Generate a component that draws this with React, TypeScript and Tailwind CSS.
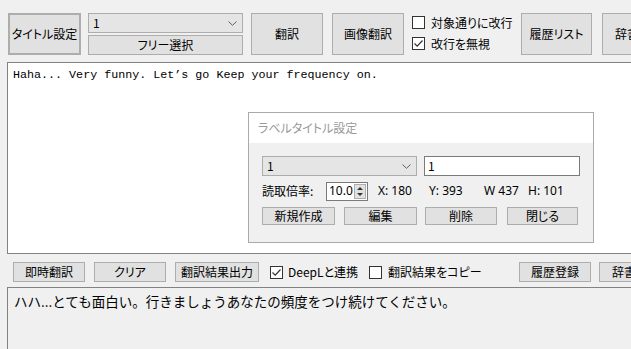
import React from "react";

const ui = "font-['Noto_Sans_CJK_JP','Noto_Sans',sans-serif] [font-feature-settings:'palt'] text-[12px] text-black";

function Btn({ children, className = "" }: { children: React.ReactNode; className?: string }) {
  return (
    <div
      className={`flex shrink-0 items-center justify-center border border-[#adadad] bg-[#e1e1e1] leading-none ${className}`}
    >
      {children}
    </div>
  );
}

function Check({ checked }: { checked?: boolean }) {
  return (
    <div className="flex h-[13px] w-[13px] shrink-0 items-center justify-center border border-[#333333] bg-white">
      {checked && (
        <svg width="11" height="11" viewBox="0 0 11 11">
          <polyline points="1.5,5.5 4.2,8.2 9.5,2.5" fill="none" stroke="#333" strokeWidth="1.2" />
        </svg>
      )}
    </div>
  );
}

function Chevron() {
  return (
    <svg width="9" height="5" viewBox="0 0 9 5">
      <polyline points="0.5,0.5 4.5,4.3 8.5,0.5" fill="none" stroke="#606060" strokeWidth="1" />
    </svg>
  );
}

export default function App() {
  return (
    <div className={`relative h-[349px] w-[631px] overflow-hidden bg-[#f0f0f0] ${ui}`}>
      {/* top toolbar */}
      <div className="flex h-[55px] items-start pl-[8px] pt-[13px]">
        <Btn className="h-[42px] w-[73px] border-2 border-[#0078d7]">タイトル設定</Btn>
        <div className="ml-[7px] flex w-[155px] shrink-0 flex-col gap-[2px]">
          <div className="flex h-[20px] items-center justify-between border border-[#adadad] bg-[#e5e5e5] pl-[4px] pr-[5px]">
            <span className="leading-none">1</span>
            <Chevron />
          </div>
          <Btn className="h-[20px]">フリー選択</Btn>
        </div>
        <Btn className="ml-[8px] h-[42px] w-[72px]">翻訳</Btn>
        <Btn className="ml-[9px] h-[42px] w-[72px]">画像翻訳</Btn>
        <div className="ml-[8px] flex w-[109px] shrink-0 flex-col gap-[8px] pt-[3px]">
          <div className="flex h-[13px] items-center gap-[6px]">
            <Check />
            <span className="leading-none">対象通りに改行</span>
          </div>
          <div className="flex h-[13px] items-center gap-[6px]">
            <Check checked />
            <span className="leading-none">改行を無視</span>
          </div>
        </div>
        <Btn className="h-[42px] w-[71px]">履歴リスト</Btn>
        <Btn className="ml-[10px] h-[42px] w-[72px] justify-start pl-[12px]">辞書登録</Btn>
      </div>

      {/* top text area */}
      <div className="ml-[7px] mt-[7px] h-[192px] w-[640px] border border-[#828282] bg-white px-[5px] pt-[5px] font-['Liberation_Mono',monospace] text-[11.7px] leading-[14px] [font-feature-settings:normal]">
        Haha... Very funny. Let’s go Keep your frequency on.
      </div>

      {/* bottom toolbar */}
      <div className="flex h-[20px] items-center pl-[13px] mt-[8px]">
        <Btn className="h-[20px] w-[72px]">即時翻訳</Btn>
        <Btn className="ml-[9px] h-[20px] w-[72px]">クリア</Btn>
        <Btn className="ml-[9px] h-[20px] w-[84px]">翻訳結果出力</Btn>
        <div className="ml-[11px] flex items-center gap-[5px]">
          <Check checked />
          <span className="leading-none">DeepLと連携</span>
        </div>
        <div className="ml-[11px] flex items-center gap-[6px]">
          <Check />
          <span className="leading-none">翻訳結果をコピー</span>
        </div>
        <div className="flex-1" />
        <Btn className="h-[20px] w-[72px]">履歴登録</Btn>
        <Btn className="ml-[8px] mr-[-40px] h-[20px] w-[72px] justify-start pl-[12px]">辞書</Btn>
      </div>

      {/* bottom text area */}
      <div className="ml-[7px] mt-[5px] h-[70px] w-[640px] border border-[#828282] bg-[#f0f0f0] px-[6px] pt-[4px] font-['Noto_Sans_CJK_JP',sans-serif] text-[13.5px] leading-[18px] [font-feature-settings:normal]">
        ハハ...とても面白い。行きましょうあなたの頻度をつけ続けてください。
      </div>

      {/* floating dialog */}
      <div className="absolute left-[248px] top-[112px] flex h-[131px] w-[346px] flex-col border border-[#aaaaaa] bg-[#f0f0f0]">
        <div className="flex h-[30px] items-center bg-white pl-[9px] text-[#999999]">ラベルタイトル設定</div>
        <div className="flex flex-col px-[13px] pt-[13px]">
          <div className="flex h-[20px] items-center gap-[7px]">
            <div className="flex h-[20px] w-[156px] items-center justify-between border border-[#adadad] bg-[#e5e5e5] pl-[4px] pr-[5px]">
              <span className="leading-none">1</span>
              <Chevron />
            </div>
            <div className="flex h-[20px] w-[157px] items-center border border-[#7a7a7a] bg-white pl-[3px]">
              <span className="leading-none">1</span>
            </div>
          </div>
          <div className="mt-[6px] flex h-[18px] items-center">
            <span className="w-[64px] leading-none">読取倍率:</span>
            <div className="flex h-[19px] w-[42px] items-center border border-[#7a7a7a] bg-white pl-[2px]">
              <span className="flex-1 font-['Noto_Sans',sans-serif] leading-none">10.0</span>
              <div className="mr-[1px] flex h-[15px] w-[12px] flex-col items-center justify-center gap-[3px] border border-[#adadad] bg-[#e1e1e1]">
                <svg width="6" height="3" viewBox="0 0 6 3"><polygon points="0,3 3,0 6,3" fill="#333" /></svg>
                <svg width="6" height="3" viewBox="0 0 6 3"><polygon points="0,0 6,0 3,3" fill="#333" /></svg>
              </div>
            </div>
            <span className="ml-[10px] w-[51px] font-['Noto_Sans',sans-serif] leading-none">X: 180</span>
            <span className="w-[55px] font-['Noto_Sans',sans-serif] leading-none">Y: 393</span>
            <span className="w-[44px] font-['Noto_Sans',sans-serif] leading-none">W 437</span>
            <span className="font-['Noto_Sans',sans-serif] leading-none">H: 101</span>
          </div>
          <div className="mt-[7px] flex h-[18px] items-center">
            <Btn className="h-[18px] w-[73px]">新規作成</Btn>
            <Btn className="ml-[9px] h-[18px] w-[73px]">編集</Btn>
            <Btn className="ml-[8px] h-[18px] w-[72px]">削除</Btn>
            <Btn className="ml-[10px] h-[18px] w-[71px]">閉じる</Btn>
          </div>
        </div>
      </div>
    </div>
  );
}
